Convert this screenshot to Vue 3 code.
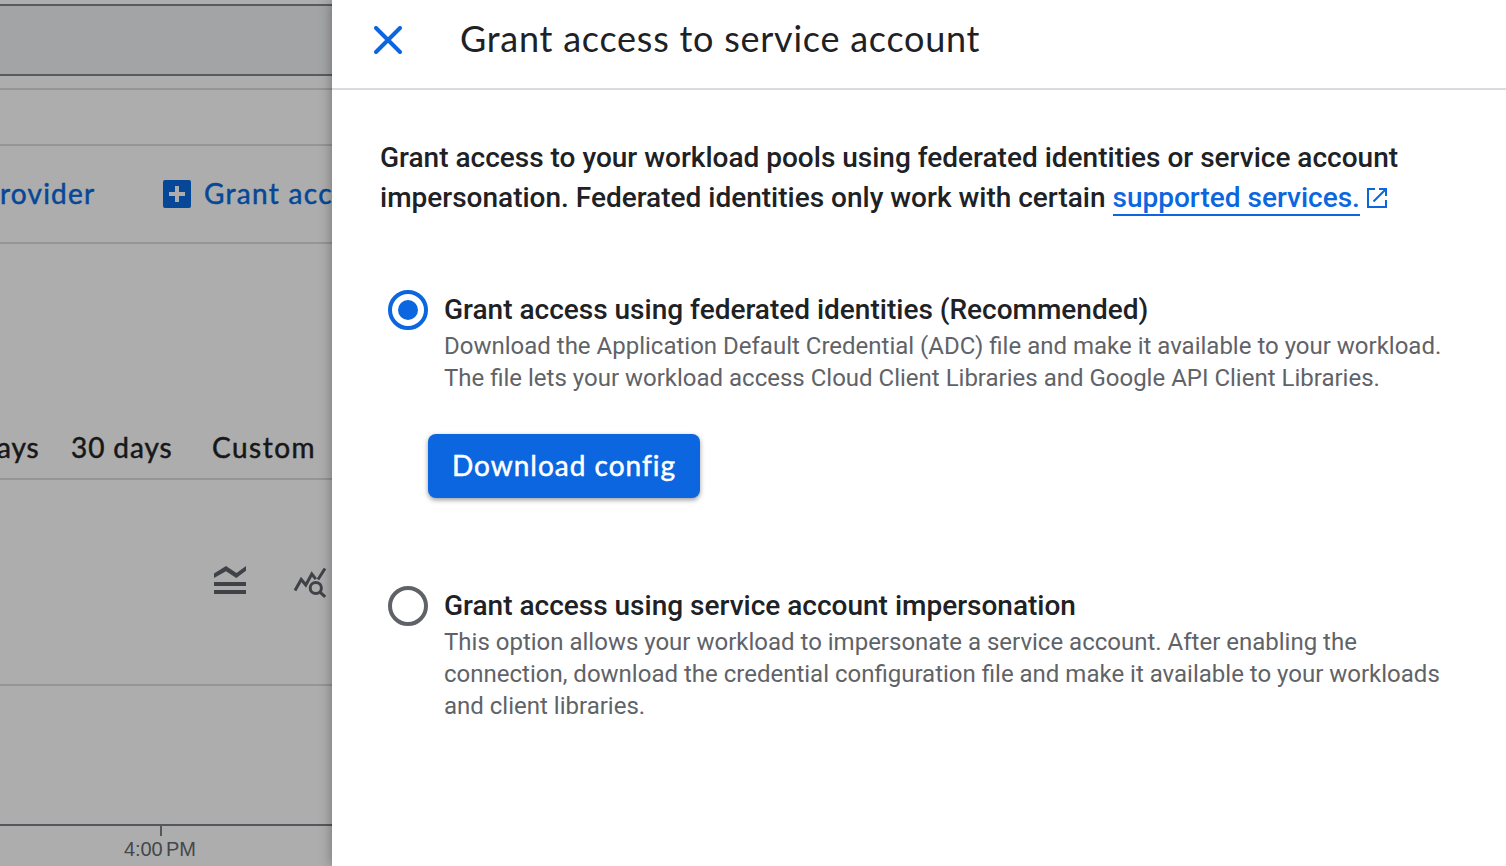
<script setup>
const supportedHref = '#'
</script>

<template>
  <div class="screen">
    <div class="page" aria-hidden="true">
      <div class="band"></div>
      <div class="gap-row"></div>
      <div class="blank-row"></div>
      <div class="actions">
        <span class="action provider">rovider</span>
        <svg class="add" viewBox="0 0 28 28"><rect width="28" height="28" rx="2" fill="#064798" /><path d="M14 6v16M6 14h16" stroke="#adadad" stroke-width="4" /></svg>
        <span class="action grant">Grant acc</span>
      </div>
      <div class="ranges">
        <span class="range days">ays</span>
        <span class="range thirty">30 days</span>
        <span class="range custom">Custom</span>
      </div>
      <div class="tools">
        <svg class="legend" viewBox="0 0 32 28"><path d="M0 7.500 12 0l10.500 7L32 0v4.800L22.300 12 12 5.200 0 12zM0 16h32v4H0zM0 24h32v4H0z" fill="#3f4348" /></svg>
        <svg class="query" viewBox="0 0 34 32" fill="none" stroke="#3f4348" stroke-width="3"><path d="M2 23.500 8.200 12.500l4.600 5.500 6-11 4 5.200M25 12.500 32 1.500" /><circle cx="22.800" cy="21" r="5.600" /><path d="m26.700 24.800 5.500 5" /></svg>
      </div>
      <div class="chart"></div>
      <div class="axis"><span class="tick"></span><span class="time">4:00 PM</span></div>
    </div>

    <aside class="drawer">
      <header class="head">
        <svg class="close" viewBox="0 0 28 28"><path d="M2 2l24 24M26 2l-24 24" stroke="#0b66df" stroke-width="4" stroke-linecap="round" /></svg>
        <h1 class="title">Grant access to service account</h1>
      </header>
      <p class="intro">
        <span class="line">Grant access to your workload pools using federated identities or service account</span>
        <span class="line"><span>impersonation. Federated identities only work with certain </span><a class="link" :href="supportedHref">supported services.</a><svg class="ext" viewBox="0 0 20 20" fill="none" stroke="#0b66df" stroke-width="2"><path d="M8 1H1v18h18v-7M12 1h7v7M18.500 1.500 6.500 13.500" /></svg></span>
      </p>
      <section class="option first">
        <span class="radio on"></span>
        <div class="copy">
          <h2 class="name">Grant access using federated identities (Recommended)</h2>
          <p class="desc">
            <span class="line">Download the Application Default Credential (ADC) file and make it available to your workload.</span>
            <span class="line">The file lets your workload access Cloud Client Libraries and Google API Client Libraries.</span>
          </p>
        </div>
      </section>
      <button class="download">Download config</button>
      <section class="option second">
        <span class="radio"></span>
        <div class="copy">
          <h2 class="name">Grant access using service account impersonation</h2>
          <p class="desc">
            <span class="line">This option allows your workload to impersonate a service account. After enabling the</span>
            <span class="line">connection, download the credential configuration file and make it available to your workloads</span>
            <span class="line">and client libraries.</span>
          </p>
        </div>
      </section>
    </aside>
  </div>
</template>

<style>
body { background: #fff; overflow: hidden; }
</style>

<style scoped>
.screen { display: flex; width: 1506px; height: 866px; overflow: hidden; font-family: Roboto, sans-serif; }
.screen * { box-sizing: border-box; }
.page { width: 332px; flex: none; display: flex; flex-direction: column; overflow: hidden; background: #adadad; white-space: nowrap; }
.page > *, .actions > *, .ranges > * { flex: none; }
.band { height: 72px; margin-top: 4px; background: #a3a4a6; border-top: 2px solid #595b60; border-bottom: 2px solid #595b60; }
.gap-row { height: 14px; border-bottom: 2px solid #949499; }
.blank-row { height: 56px; border-bottom: 2px solid #949499; }
.actions { height: 98px; display: flex; align-items: center; border-bottom: 2px solid #949499; }
.action, .range { font-family: Lato, sans-serif; font-size: 28px; line-height: 36px; -webkit-text-stroke: 0.5px currentColor; }
.action { color: #064798; padding-bottom: 3px; }
.provider { width: 163px; letter-spacing: 1.2px; }
.add { width: 28px; height: 28px; margin-right: 13px; }
.grant { letter-spacing: 1.3px; }
.ranges { height: 236px; display: flex; align-items: flex-end; padding-bottom: 13px; color: #171718; border-bottom: 2px solid #949499; }
.days { width: 71px; margin-left: -3px; margin-right: 3px; letter-spacing: 0.9px; }
.thirty { width: 141px; letter-spacing: 0.9px; }
.custom { letter-spacing: 1.5px; }
.tools { height: 206px; display: flex; padding: 86px 0 0 214px; border-bottom: 2px solid #949499; }
.legend { width: 32px; height: 28px; margin-right: 47px; flex: none; }
.query { width: 34px; height: 32px; margin-top: 1px; flex: none; }
.chart { height: 140px; border-bottom: 2px solid #54585c; }
.axis { width: 322px; display: flex; flex-direction: column; align-items: center; }
.tick { width: 2px; height: 10px; background: #54585c; }
.time { font-family: "Liberation Sans", Arial, sans-serif; font-size: 20px; line-height: 24px; color: #44474b; margin: 1px 2px 0 0; word-spacing: -2px; letter-spacing: -0.1px; }
.drawer { position: relative; flex: 1; min-width: 0; background: #fff; box-shadow: 0 0 12px rgba(0, 0, 0, 0.35); white-space: nowrap; }
.head { height: 90px; display: flex; align-items: center; padding: 0 0 8px 42px; border-bottom: 2px solid #dadae0; }
.close { width: 28px; height: 28px; margin-right: 58px; }
.title { margin: 0; padding-bottom: 3px; font-family: Lato, sans-serif; font-size: 36px; line-height: 41px; font-weight: 400; color: #202124; letter-spacing: 0.75px; }
.line { display: block; }
.intro { margin: 48px 0 0 48px; font-size: 28px; line-height: 40px; font-weight: 500; color: #202124; }
.link { display: inline-block; height: 38px; color: #0b66df; text-decoration: none; border-bottom: 2px solid #0b66df; }
.ext { width: 20px; height: 20px; margin-left: 7px; vertical-align: -1px; }
.option { display: flex; padding-left: 56px; }
.first { margin-top: 72px; }
.radio { width: 40px; height: 40px; flex: none; margin-right: 16px; border: 4px solid #5f6368; border-radius: 50%; }
.on { display: flex; align-items: center; justify-content: center; border-color: #0b66df; }
.on::after { content: ""; width: 20px; height: 20px; border-radius: 50%; background: #0b66df; }
.name { margin: 0; font-size: 28px; line-height: 40px; font-weight: 500; color: #202124; }
.desc { margin: 0; font-size: 24px; line-height: 32px; color: #5f6368; }
.download { display: block; width: 272px; height: 64px; margin: 40px 0 0 96px; padding: 0 0 2px; border: 0; border-radius: 8px; background: #0b66df; color: #fff; font: 28px/62px Lato, sans-serif; -webkit-text-stroke: 0.5px currentColor; letter-spacing: 1px; box-shadow: 0 2px 5px rgba(0, 0, 0, 0.4); }
.second { margin-top: 88px; }
</style>
